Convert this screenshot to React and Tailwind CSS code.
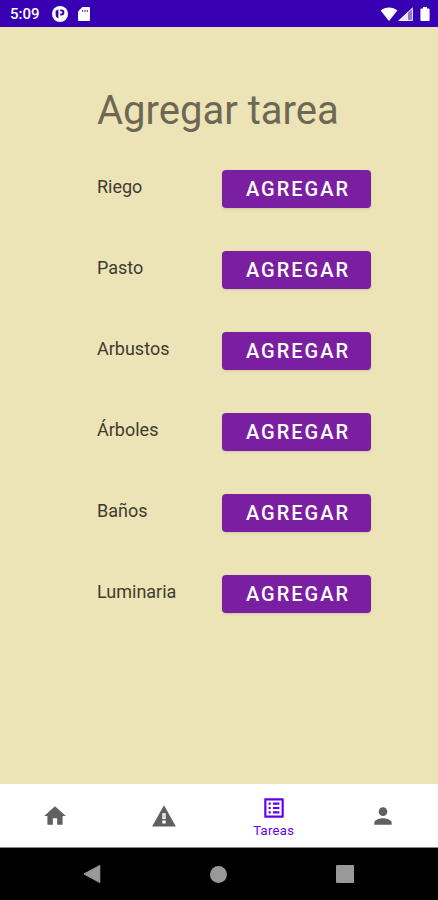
import { MdHome, MdOutlineListAlt, MdPerson } from "react-icons/md";

const TASKS = [
  { id: "riego", label: "Riego" },
  { id: "pasto", label: "Pasto" },
  { id: "arbustos", label: "Arbustos" },
  { id: "arboles", label: "Árboles" },
  { id: "banos", label: "Baños" },
  { id: "luminaria", label: "Luminaria" },
];

function WarningIcon({ className }) {
  return (
    <svg className={className} viewBox="0 0 24 24" fill="currentColor" aria-hidden="true">
      <path d="M1 21.6h22L12 2z" />
      <path d="M10.4 9.4h3.2v5.4h-3.2zM10.4 16.2h3.2v2.8h-3.2z" fill="#fff" />
      <path d="M11.5 10.6h1v3h-1z" fillOpacity=".5" />
    </svg>
  );
}

const NAV_ITEMS = [
  { href: "#inicio", icon: MdHome, label: "Inicio" },
  { href: "#alertas", icon: WarningIcon, label: "Alertas" },
  { href: "#tareas", icon: MdOutlineListAlt, label: "Tareas", active: true },
  { href: "#perfil", icon: MdPerson, label: "Perfil" },
];

function StatusBar() {
  return (
    <header className="flex h-[27px] items-center justify-between bg-[#3700b3] pl-[10px] pr-2 pt-px text-white">
      <div className="flex items-center">
        <span className="text-[15px] font-medium leading-5">5:09</span>
        <svg className="ml-3 size-4" viewBox="0 0 16 16" aria-hidden="true">
          <circle cx="8" cy="8" r="8" fill="#fff" />
          <path d="M3.6 5.4Q4.6 3.6 6.4 3.4V12.4Q3.6 11.4 3.6 9z" fill="#3700b3" />
          <path d="M8.2 3.4h1.2a3 3 0 0 1 0 6H8.2V7.6h1a1.2 1.2 0 0 0 0-2.4h-1z" fill="#3700b3" />
        </svg>
        <svg className="ml-[10px] h-4 w-3" viewBox="0 0 12 16" aria-hidden="true">
          <path
            d="M4.4 1H11a1 1 0 0 1 1 1v12a1 1 0 0 1-1 1H1a1 1 0 0 1-1-1V5.4z"
            fill="#fff"
          />
          <path d="M4 4h1.2v2H4zM6.4 4h1.2v2H6.4zM8.8 4H10v2H8.8z" fill="#3700b3" fillOpacity=".7" />
        </svg>
      </div>
      <div className="flex items-center">
        <svg className="h-4 w-[18px]" viewBox="0 0 18 16" aria-hidden="true">
          <path d="M9 15 .6 4.6C3 2.4 6 1.4 9 1.4s6 1 8.4 3.2z" fill="#fff" />
        </svg>
        <svg className="h-4 w-[15px]" viewBox="0 0 15 16" aria-hidden="true">
          <path d="M0 15 15 1v14z" fill="#fff" fillOpacity=".45" />
          <path d="M0 15 10 5.7V15z" fill="#fff" fillOpacity=".8" />
          <path d="M14.4 2.2V14.4H1.6z" fill="none" stroke="#fff" strokeOpacity=".8" />
        </svg>
        <svg className="ml-[7px] h-4 w-[10px]" viewBox="0 0 10 16" aria-hidden="true">
          <path
            d="M3 1h4v1.4h1.6a1 1 0 0 1 1 1V14a1 1 0 0 1-1 1H1.4a1 1 0 0 1-1-1V3.4a1 1 0 0 1 1-1H3z"
            fill="#fff"
          />
        </svg>
      </div>
    </header>
  );
}

function TaskRow({ id, label }) {
  return (
    <li className="flex items-start justify-between">
      <span id={id} className="pt-[3px] text-[18px] leading-7 text-[#3f3b2f]">
        {label}
      </span>
      <button
        type="button"
        aria-describedby={id}
        className="h-[38px] w-[149px] rounded-[4px] bg-[#7b1fa2] pl-[3px] text-xl font-medium tracking-widest text-white shadow-sm"
      >
        AGREGAR
      </button>
    </li>
  );
}

function BottomNav() {
  return (
    <nav className="grid h-16 grid-cols-4 border-b border-[#8a8a8a] bg-white">
      {NAV_ITEMS.map(({ href, icon: Icon, label, active }) => (
        <a
          key={href}
          href={href}
          aria-label={label}
          aria-current={active ? "page" : undefined}
          className={
            active
              ? "flex flex-col items-center justify-center pt-1 text-[#6200ee]"
              : "flex flex-col items-center justify-center text-[#606060]"
          }
        >
          <Icon className="size-[26px]" />
          {active && <span className="text-[13px] leading-5 tracking-wide">{label}</span>}
        </a>
      ))}
    </nav>
  );
}

function SystemBar() {
  return (
    <div className="flex h-13 items-center justify-between bg-black pl-[83px] pr-[84px]">
      <button type="button" aria-label="Atrás">
        <svg className="h-5 w-[18px]" viewBox="0 0 18 20">
          <path d="M16.8 1.4v17.2L.9 10z" fill="#999" stroke="#999" strokeLinejoin="round" />
        </svg>
      </button>
      <button type="button" aria-label="Inicio" className="size-[17px] rounded-full bg-[#999]" />
      <button type="button" aria-label="Recientes" className="size-[18px] rounded-[1px] bg-[#999]" />
    </div>
  );
}

export default function App() {
  return (
    <div className="flex min-h-screen flex-col bg-[#ece4b7] font-[Roboto,sans-serif]">
      <StatusBar />
      <main className="flex-1 pb-10 pl-[97px] pr-[67px] pt-[60px]">
        <h1 className="whitespace-nowrap text-[40px] leading-[48px] text-[#6d6854]">Agregar tarea</h1>
        <ul className="mt-[35px] flex flex-col gap-[43px]">
          {TASKS.map((task) => (
            <TaskRow key={task.id} {...task} />
          ))}
        </ul>
      </main>
      <BottomNav />
      <SystemBar />
    </div>
  );
}
